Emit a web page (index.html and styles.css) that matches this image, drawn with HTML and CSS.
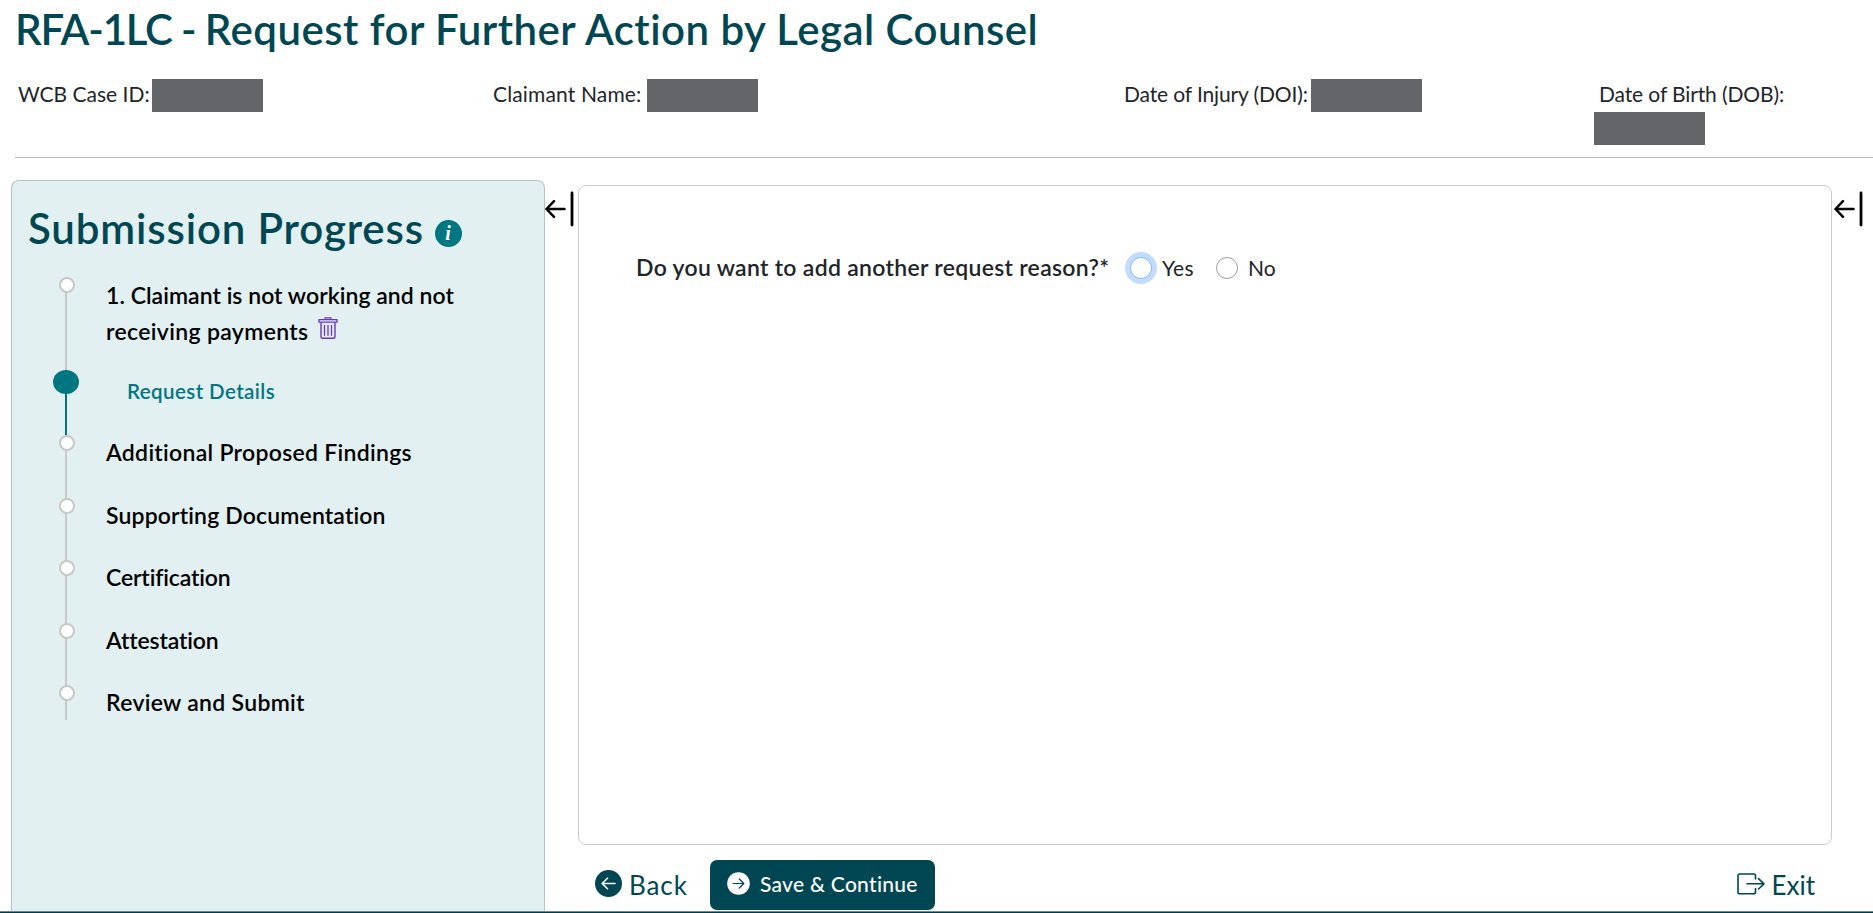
FILE: index.html
```html
<!DOCTYPE html>
<html lang="en">
<head>
    <meta charset="UTF-8">
    <meta name="viewport" content="width=device-width, initial-scale=1.0">
    <title>RFA-1LC - Request for Further Action by Legal Counsel</title>
    <link rel="stylesheet" href="styles.css">
</head>
<body>
    <header class="page-header">
        <h1 class="page-title"><span class="form-number">RFA-1LC - </span>Request for Further Action by Legal Counsel</h1>
        <div class="case-info">
            <div class="info-item"><span class="info-label case-id">WCB Case ID:</span><span class="redacted"></span></div>
            <div class="info-item"><span class="info-label claimant">Claimant Name:</span><span class="redacted"></span></div>
            <div class="info-item"><span class="info-label doi">Date of Injury (DOI):</span><span class="redacted"></span></div>
            <div class="info-item wrap"><span class="info-label dob">Date of Birth (DOB):</span><span class="redacted"></span></div>
        </div>
    </header>
    <main class="layout">
        <aside class="sidebar">
            <h2 class="sidebar-title">
                <span class="sidebar-heading">Submission Progress</span>
                <span class="info-icon">i</span>
            </h2>
            <ol class="steps">
                <li class="step first">
                    <span class="step-text"><span class="line-one">1. Claimant is not working and not</span><br><span class="line-two">receiving payments</span>
                        <svg class="trash" width="20" height="22" viewBox="0 0 20 22" fill="none" stroke="#6f35c4">
                            <path d="M1 2.6h18v2.6H1zM7.2 2.3V.8h5.6v1.5" stroke-width="1.3"/>
                            <path d="M3 5.5v14q0 1.8 1.8 1.8h10.4q1.8 0 1.8-1.8v-14" stroke-width="1.4"/>
                            <path d="M6.5 8.3v10M10 8.3v10M13.5 8.3v10" stroke-width="1.3" stroke-linecap="round"/>
                        </svg>
                    </span>
                </li>
                <li class="step active"><span class="step-text">Request Details</span></li>
                <li class="step"><span class="step-text">Additional Proposed Findings</span></li>
                <li class="step"><span class="step-text supporting">Supporting Documentation</span></li>
                <li class="step narrow"><span class="step-text">Certification</span></li>
                <li class="step narrow"><span class="step-text">Attestation</span></li>
                <li class="step last"><span class="step-text">Review and Submit</span></li>
            </ol>
        </aside>
        <div class="collapse">
            <svg width="29" height="36" viewBox="0 0 29 36" fill="none" stroke="#000" stroke-linecap="round" stroke-linejoin="round">
                <path d="M19.5 18H1.5M9 10.2L1.5 18L9 25.8" stroke-width="2.5"/>
                <path d="M27 2v32" stroke-width="2.8"/>
            </svg>
        </div>
        <section class="content">
            <form class="panel">
                <span class="question">Do you want to add another request reason?*</span>
                <label class="option yes"><input type="radio" name="reason" class="radio focused">Yes</label>
                <label class="option no"><input type="radio" name="reason" class="radio">No</label>
            </form>
            <div class="actions">
                <a class="link back">
                    <svg width="27" height="27" viewBox="0 0 27 27" fill="none">
                        <circle cx="13.5" cy="13.5" r="13.5" fill="#004753"/>
                        <path d="M20 13.5H7.5M12.5 8.2l-5.3 5.3l5.3 5.3" stroke="#fff" stroke-width="1.6" stroke-linecap="round" stroke-linejoin="round"/>
                    </svg>
                    <span>Back</span>
                </a>
                <button type="button" class="save">
                    <svg width="23" height="23" viewBox="0 0 23 23" fill="none">
                        <circle cx="11.5" cy="11.5" r="11.3" fill="#fff"/>
                        <path d="M6.2 11.5h10.5M12.3 7l4.5 4.5l-4.5 4.5" stroke="#004753" stroke-width="1.2" stroke-linecap="round" stroke-linejoin="round"/>
                    </svg>
                    <span>Save &amp; Continue</span>
                </button>
                <a class="link exit">
                    <svg width="28" height="22" viewBox="0 0 28 22" fill="none" stroke="#004753" stroke-width="1.6" stroke-linecap="round" stroke-linejoin="round">
                        <path d="M18.5 6V2.8Q18.5 1 16.7 1H2.8Q1 1 1 2.8V19Q1 20.8 2.8 20.8H16.7Q18.5 20.8 18.5 19V15.5"/>
                        <path d="M10 10.8H27M21.5 5.6L27 10.8L21.5 16"/>
                    </svg>
                    <span>Exit</span>
                </a>
            </div>
        </section>
        <div class="collapse right">
            <svg width="29" height="36" viewBox="0 0 29 36" fill="none" stroke="#000" stroke-linecap="round" stroke-linejoin="round">
                <path d="M19.5 18H1.5M9 10.2L1.5 18L9 25.8" stroke-width="2.5"/>
                <path d="M27 2v32" stroke-width="2.8"/>
            </svg>
        </div>
    </main>
    <footer class="page-footer"></footer>
</body>
</html>
```
FILE: styles.css
```css
*, *::before {
    box-sizing: border-box;
}

body {
    font-family: Lato, "Open Sans", sans-serif;
    font-variant-ligatures: none;
    margin: 0;
    height: 913px;
    overflow: hidden;
    display: flex;
    flex-direction: column;
    background-color: #fff;
    color: #212529;
}

/* header */
.page-header {
    height: 158px;
    margin-left: 15px;
    border-bottom: 1px solid #bbb;
    flex: none;
}

.page-title {
    margin: 0;
    padding-top: 4px;
    height: 79px;
    font-size: 42px;
    line-height: 50px;
    font-weight: 600;
    letter-spacing: 0.47px;
    color: #004753;
    white-space: nowrap;
}

.form-number {
    letter-spacing: -1.2px;
}

.case-info {
    display: grid;
    grid-template-columns: 475px 631px 476px 1fr;
}

.info-item {
    display: flex;
    font-size: 21px;
    line-height: 30px;
    padding-left: 3px;
    white-space: nowrap;
}

.info-label {
    height: 33px;
}

.case-id { width: 134px; }

.claimant {
    width: 154px;
    letter-spacing: 0.15px;
}

.doi {
    width: 187px;
    letter-spacing: -0.13px;
}

.redacted {
    width: 111px;
    height: 33px;
    background-color: #646569;
}

.wrap {
    flex-direction: column;
    padding-left: 0;
    margin-left: -3px;
}

.dob {
    padding-left: 5px;
    letter-spacing: -0.12px;
}

/* three columns under the header */
.layout {
    display: flex;
    flex: 1;
    min-height: 0;
    padding-left: 11px;
}

.sidebar {
    width: 534px;
    flex: none;
    margin-top: 22px;
    padding: 22px 16px 0;
    border: 1px solid #b4c3c6;
    border-bottom: 0;
    border-radius: 8px 8px 0 0;
    background-color: #e2f0f1;
}

.sidebar-title {
    display: flex;
    align-items: center;
    gap: 11px;
    margin: 0;
    height: 50px;
    font-size: 42px;
    line-height: 50px;
    font-weight: 600;
    letter-spacing: 0.85px;
    color: #004753;
    white-space: nowrap;
}

.info-icon {
    width: 27px;
    height: 27px;
    margin-top: 10px;
    border-radius: 50%;
    background-color: #007681;
    color: #fff;
    font: italic bold 20px/26px "Liberation Serif", serif;
    text-align: center;
}

.steps {
    list-style: none;
    margin: 24px 0 0;
    padding: 0 0 0 37px;
}

.step {
    position: relative;
    height: 62.5px;
    padding-left: 39px;
    border-left: 2px solid #c8c8c8;
    font-size: 23px;
    line-height: 34px;
    font-weight: 600;
    letter-spacing: 0.3px;
    color: #000;
    white-space: nowrap;
}

.step::before {
    content: "";
    position: absolute;
    left: -8px;
    top: 0;
    width: 16px;
    height: 16px;
    border: 2px solid #c8c8c8;
    border-radius: 50%;
    background-color: #fff;
}

.step.first {
    height: 97px;
    line-height: 36px;
}

.line-one {
    letter-spacing: 0.04px;
}

.line-two {
    letter-spacing: 0.35px;
}

.step.active {
    height: 61px;
    padding-left: 60px;
    border-color: #007681;
    font-size: 20.5px;
    letter-spacing: 0.42px;
    color: #007681;
}

.step.active::before {
    left: -14px;
    top: -4px;
    width: 26px;
    height: 24px;
    border: 0;
    background-color: #007681;
}

.step .supporting {
    letter-spacing: 0.15px;
}

.step.narrow {
    letter-spacing: -0.13px;
}

.step.last {
    height: 35px;
}

.trash {
    margin-left: 3px;
    vertical-align: 1px;
}

.collapse {
    width: 33px;
    flex: none;
    padding-top: 32.5px;
}

.collapse.right {
    padding-left: 2px;
}

/* question panel */
.content {
    width: 1254px;
    flex: none;
    padding-top: 27px;
}

.panel {
    display: flex;
    height: 660px;
    padding: 67px 0 0 57px;
    border: 1px solid #ccc;
    border-radius: 8px;
    font-size: 21px;
    line-height: 30px;
    white-space: nowrap;
}

.question {
    width: 494px;
    font-size: 23px;
    line-height: 28px;
    font-weight: 600;
    letter-spacing: 0.3px;
}

.option {
    display: flex;
    align-items: center;
    height: 29px;
}

.yes {
    width: 86px;
    letter-spacing: 0.3px;
}

.radio {
    appearance: none;
    width: 22px;
    height: 22px;
    margin: 0 10px 0 0;
    border: 1px solid #a0a0a0;
    border-radius: 50%;
    background-color: #fff;
}

.radio.focused {
    border-color: #86b7fe;
    box-shadow: 0 0 0 5px #c2dbfe;
}

.actions {
    display: flex;
    padding: 15px 17px 0 17px;
}

.link {
    display: flex;
    align-items: center;
    height: 47px;
    gap: 7px;
    font-size: 26px;
    color: #004753;
    white-space: nowrap;
}

.back {
    width: 115px;
    letter-spacing: 0.9px;
}

.save {
    display: flex;
    align-items: center;
    gap: 10px;
    width: 225px;
    height: 50px;
    padding: 0 0 4px 17px;
    border: 0;
    border-radius: 7px;
    background-color: #004753;
    color: #fff;
    font-family: inherit;
    font-size: 21px;
    font-weight: 500;
    letter-spacing: 0.28px;
    white-space: nowrap;
}

.link span {
    padding-top: 2px;
}

.exit {
    margin-left: auto;
    gap: 6px;
}

.page-footer {
    height: 2px;
    flex: none;
    border-top: 1px solid #6f8790;
    background-color: #003b4a;
}
```
